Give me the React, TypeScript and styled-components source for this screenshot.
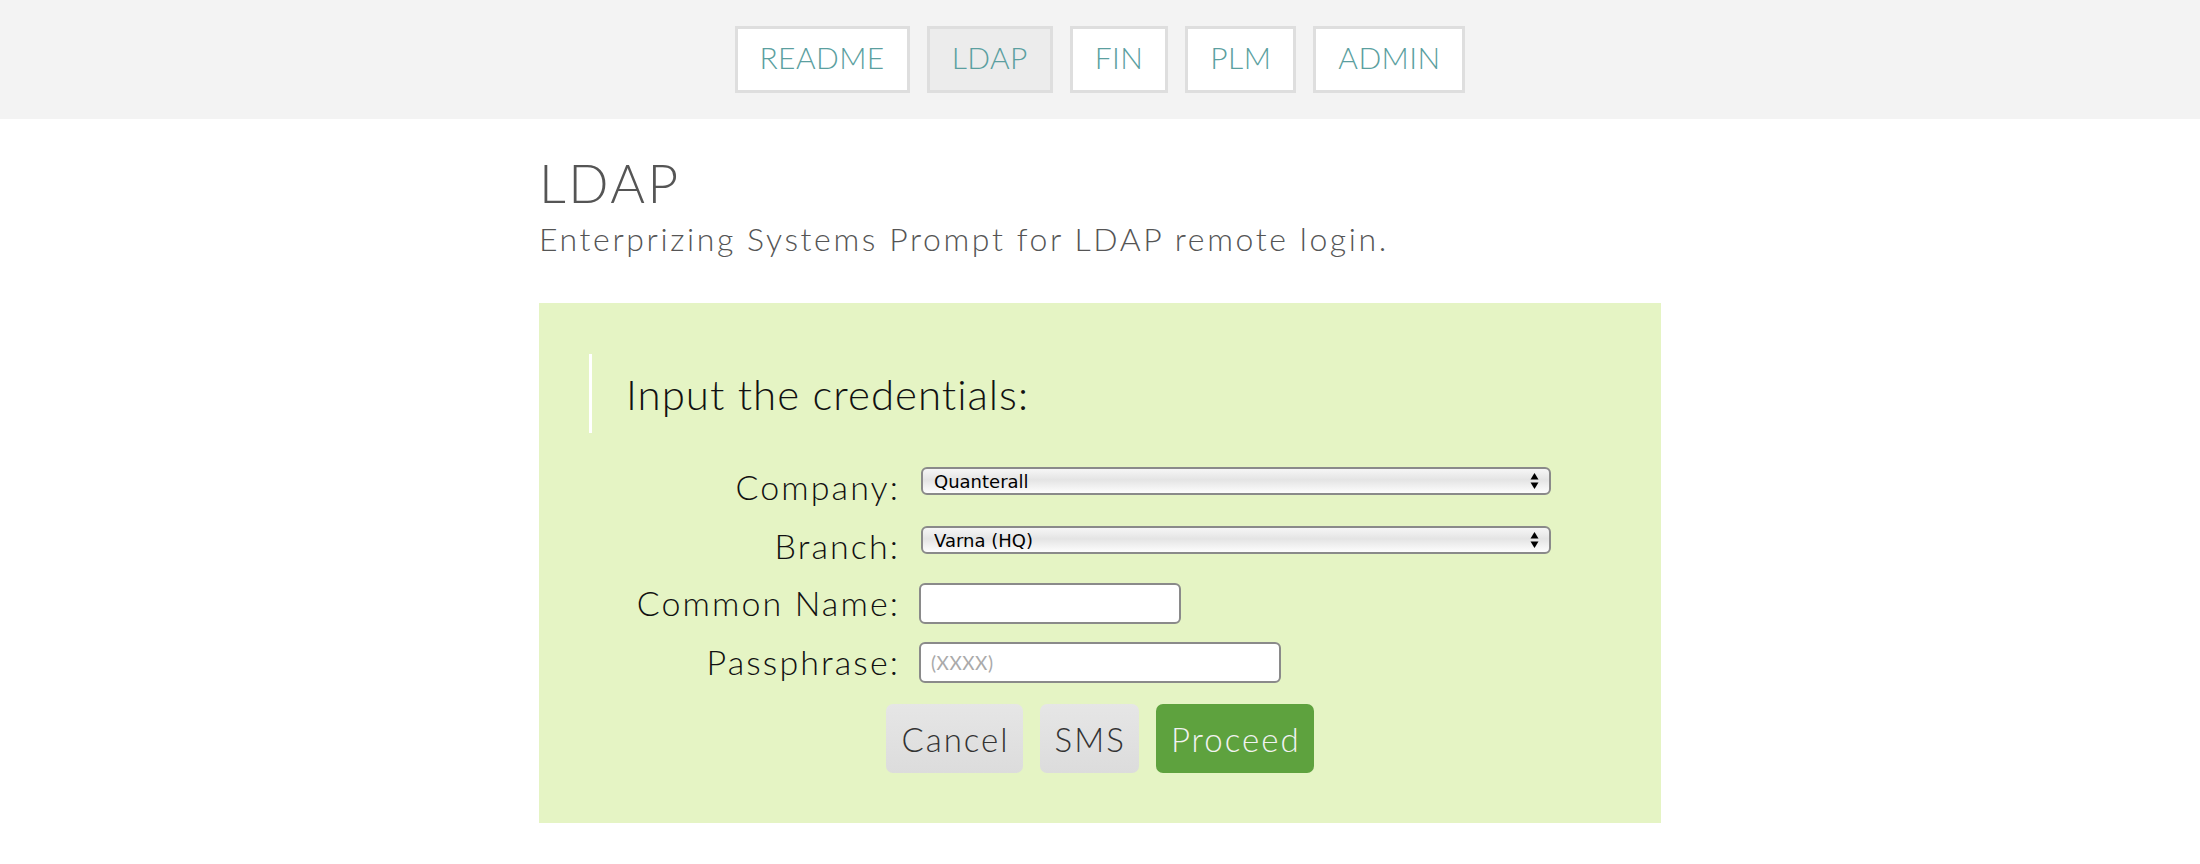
import React from "react";
import styled, { createGlobalStyle } from "styled-components";

const GlobalStyle = createGlobalStyle`
  body {
    margin: 0;
    background: #fff;
    font-family: "Lato", "Open Sans", sans-serif;
    font-weight: 300;
  }
`;

const Header = styled.nav`
  height: 119px;
  background: #f3f3f3;
  display: flex;
  align-items: center;
  justify-content: center;
  gap: 17px;
`;

const NavButton = styled.a<{ active?: boolean }>`
  box-sizing: border-box;
  height: 67px;
  padding: 0 22px 5px;
  display: flex;
  align-items: center;
  border: 3px solid #dedede;
  background: ${(p) => (p.active ? "#ececec" : "#fff")};
  color: #5b9fa0;
  font-size: 30px;
  letter-spacing: 0.4px;
  text-transform: uppercase;
  cursor: pointer;
`;

const Main = styled.main`
  width: 1122px;
  margin: 0 auto;
`;

const Title = styled.h1`
  margin: 37px 0 0;
  font-size: 53px;
  line-height: 1;
  font-weight: 300;
  letter-spacing: 2.5px;
  color: #555;
`;

const Subtitle = styled.p`
  margin: 14px 0 0;
  font-size: 32px;
  line-height: 1;
  letter-spacing: 2.6px;
  color: #555;
`;

const Panel = styled.section`
  box-sizing: border-box;
  margin-top: 48px;
  height: 520px;
  padding: 51px 50px 50px;
  background: #e5f4c4;
`;

const Quote = styled.blockquote`
  box-sizing: border-box;
  margin: 0;
  height: 79px;
  padding-left: 34px;
  border-left: 3px solid #fff;
  display: flex;
  align-items: center;
  font-size: 42px;
  line-height: 1;
  letter-spacing: 1px;
  color: #111;
`;

const Form = styled.form`
  margin-top: 34px;
  display: flex;
  flex-direction: column;
`;

const Row = styled.div<{ h: number }>`
  height: ${(p) => p.h}px;
  display: grid;
  grid-template-columns: 311px 1fr;
  column-gap: 17px;
  align-items: start;
`;

const Label = styled.label`
  padding-top: 3px;
  text-align: right;
  font-size: 34px;
  line-height: 1;
  letter-spacing: 2.1px;
  color: #111;
  white-space: nowrap;
`;

const SelectWrap = styled.div`
  position: relative;
  margin-left: 4px;
  width: 630px;
`;

const Select = styled.select`
  box-sizing: border-box;
  appearance: none;
  width: 100%;
  height: 28px;
  padding: 0 30px 0 11px;
  border: 2px solid #8a8a8a;
  border-radius: 6px;
  background: linear-gradient(#f6f6f6, #e4e4e4 45%, #fdfdfd);
  font-family: "DejaVu Sans", sans-serif;
  font-size: 18px;
  color: #000;
  outline: none;
`;

const Arrows = styled.svg`
  position: absolute;
  right: 12px;
  top: 5px;
  pointer-events: none;
`;

const TextInput = styled.input<{ w: number }>`
  box-sizing: border-box;
  margin-left: 2px;
  width: ${(p) => p.w}px;
  height: 41px;
  padding: 0 10px;
  border: 2px solid #8a8a8a;
  border-radius: 6px;
  background: #fff;
  font-family: "Lato", sans-serif;
  font-size: 19px;
  letter-spacing: 0.5px;
  outline: none;

  &::placeholder {
    color: #aaa;
  }
`;

const Actions = styled.div`
  display: flex;
  justify-content: center;
  gap: 17px;
`;

const Button = styled.button<{ primary?: boolean }>`
  height: 69px;
  padding: 0 13px 0 15px;
  border: none;
  border-radius: 7px;
  background: ${(p) =>
    p.primary ? "#5ea23e" : "linear-gradient(#e6e6e6, #dcdcdc)"};
  color: ${(p) => (p.primary ? "#f2f2f2" : "#333")};
  font-family: "Lato", sans-serif;
  font-weight: 300;
  font-size: 33px;
  letter-spacing: 2px;
  cursor: pointer;
`;

const SelectField = ({ value }: { value: string }) => (
  <SelectWrap>
    <Select defaultValue={value}>
      <option>{value}</option>
    </Select>
    <Arrows width="9" height="18" viewBox="0 0 9 18">
      <path d="M4.5 1 L8.5 7.5 H0.5 Z" fill="#000" />
      <path d="M4.5 17 L8.5 10.5 H0.5 Z" fill="#000" />
    </Arrows>
  </SelectWrap>
);

export default function App() {
  return (
    <>
      <GlobalStyle />
      <Header>
        <NavButton>Readme</NavButton>
        <NavButton active>LDAP</NavButton>
        <NavButton>Fin</NavButton>
        <NavButton>PLM</NavButton>
        <NavButton>Admin</NavButton>
      </Header>
      <Main>
        <Title>LDAP</Title>
        <Subtitle>Enterprizing Systems Prompt for LDAP remote login.</Subtitle>
        <Panel>
          <Quote>Input the credentials:</Quote>
          <Form onSubmit={(e) => e.preventDefault()}>
            <Row h={59}>
              <Label>Company:</Label>
              <SelectField value="Quanterall" />
            </Row>
            <Row h={57}>
              <Label>Branch:</Label>
              <SelectField value="Varna (HQ)" />
            </Row>
            <Row h={59}>
              <Label>Common Name:</Label>
              <TextInput w={262} />
            </Row>
            <Row h={62}>
              <Label>Passphrase:</Label>
              <TextInput w={362} type="password" placeholder="(XXXX)" />
            </Row>
            <Actions>
              <Button type="button">Cancel</Button>
              <Button type="button">SMS</Button>
              <Button type="submit" primary>
                Proceed
              </Button>
            </Actions>
          </Form>
        </Panel>
      </Main>
    </>
  );
}
